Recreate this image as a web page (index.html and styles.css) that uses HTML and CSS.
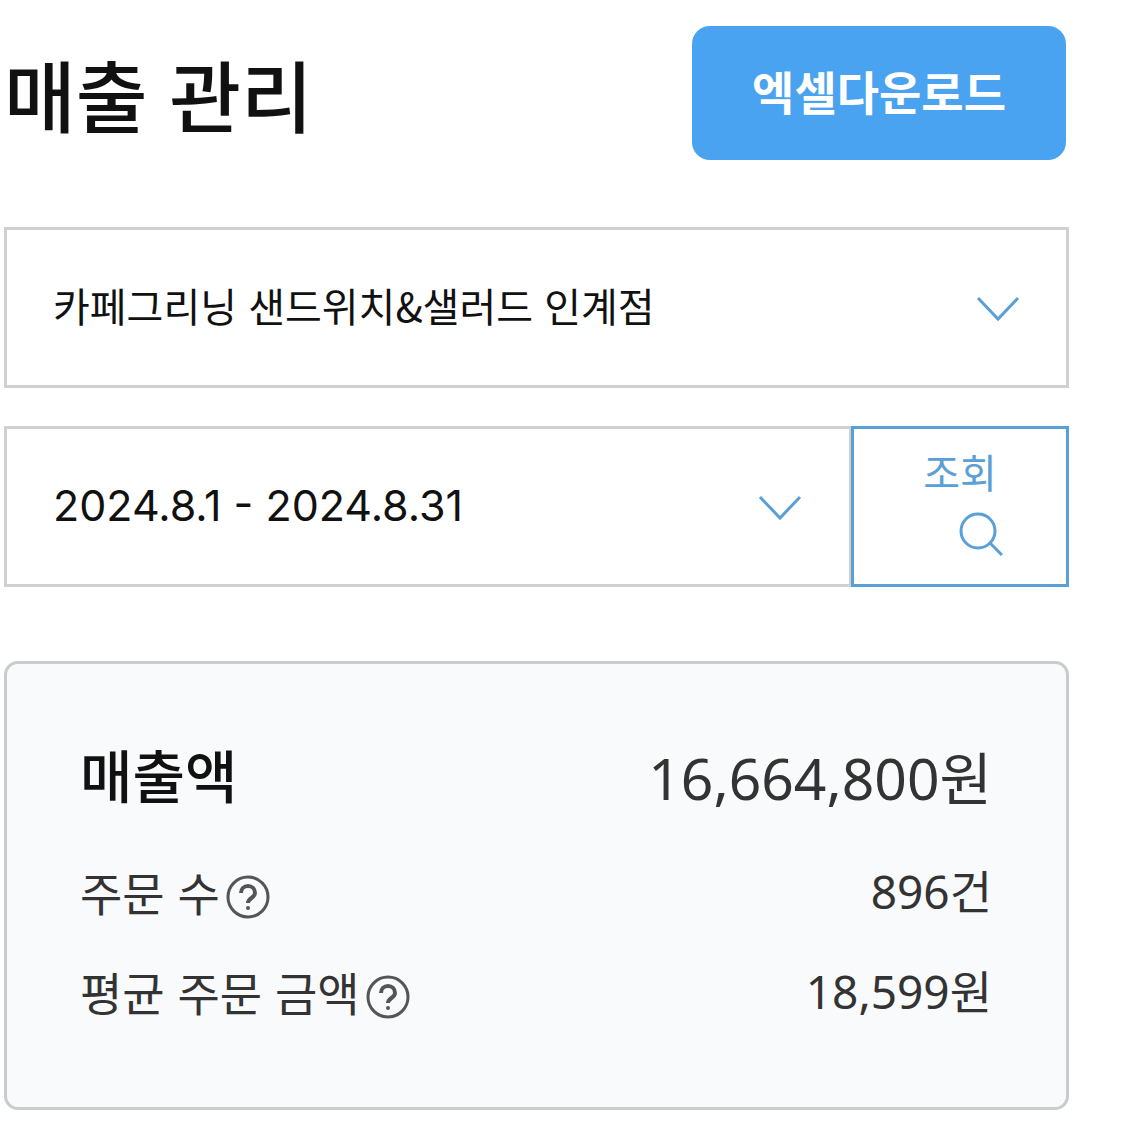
FILE: index.html
```html
<!DOCTYPE html>
<html lang="ko">
<head>
<meta charset="utf-8">
<meta name="viewport" content="width=device-width, initial-scale=1">
<title>매출 관리</title>
<link rel="stylesheet" href="styles.css">
</head>

<body>
<div class="wrap">
    <div class="header">
        <h1>매출 관리</h1>
        <button type="button" class="btn-excel">엑셀다운로드</button>
    </div>

    <form class="search">
        <div class="select-box">
            <select class="store" aria-label="매장 선택">
                <option>카페그리닝 샌드위치&amp;샐러드 인계점</option>
            </select>
            <svg class="arrow" viewBox="0 0 44 26"><path d="M2 2l20 21L42 2"/></svg>
        </div>
        <div class="row">
            <div class="select-box period-box">
                <select class="period" aria-label="조회 기간">
                    <option>2024.8.1 - 2024.8.31</option>
                </select>
                <svg class="arrow" viewBox="0 0 44 26"><path d="M2 2l20 21L42 2"/></svg>
            </div>
            <button type="button" class="btn-search">
                <span>조회</span>
                <svg viewBox="0 0 44 44"><circle cx="19" cy="19" r="17"/><path d="M31 31l12 12"/></svg>
            </button>
        </div>
    </form>

    <dl class="summary">
        <div class="total">
            <dt>매출액</dt>
            <dd>16,664,800원</dd>
        </div>
        <div>
            <dt>주문 수<button type="button" class="help" aria-label="주문 수 도움말"><svg viewBox="0 0 44 44"><circle cx="22" cy="22" r="20"/><path class="mark" d="M15 18c0-4 3-7 7-7s7 3 7 7c0 5-7 5-7 10"/><circle class="dot" cx="22" cy="33" r="2"/></svg></button></dt>
            <dd>896건</dd>
        </div>
        <div>
            <dt>평균 주문 금액<button type="button" class="help" aria-label="평균 주문 금액 도움말"><svg viewBox="0 0 44 44"><circle cx="22" cy="22" r="20"/><path class="mark" d="M15 18c0-4 3-7 7-7s7 3 7 7c0 5-7 5-7 10"/><circle class="dot" cx="22" cy="33" r="2"/></svg></button></dt>
            <dd>18,599원</dd>
        </div>
    </dl>
</div>
</body>
</html>
```
FILE: styles.css
```css
*{margin:0;padding:0;box-sizing:border-box;}
body{background:#fff;color:#111;font-family:"Noto Sans CJK KR",sans-serif;}
button,select{font-family:inherit;background:none;border:0;cursor:pointer;}
svg{display:block;fill:none;stroke:#5a9fd6;stroke-width:3;}

.wrap{padding:26px 54px 13px 4px;}

.header{display:flex;justify-content:space-between;align-items:center;height:134px;margin-bottom:67px;padding-right:3px;}
h1{font-size:78px;line-height:134px;font-weight:500;}
.btn-excel{height:134px;padding:0 60px 6px;border-radius:18px;background:#4aa3f0;color:#fff;font-size:46px;font-weight:700;}

.select-box{position:relative;}
.select-box select{display:block;width:100%;height:161px;padding:0 120px 6px 46px;border:3px solid #d0d0d0;background:#fff;color:#111;font-size:40px;appearance:none;}
.select-box .period{padding-bottom:4px;font-family:Inter,"Noto Sans CJK KR",sans-serif;font-size:43px;}
.arrow{position:absolute;right:49px;top:69px;width:44px;height:26px;pointer-events:none;}
.row{display:flex;margin-top:38px;}
.period-box{flex:1;}
.period-box select{border-right-width:2px;}
.btn-search{display:flex;flex-direction:column;align-items:center;width:218px;height:161px;padding-top:16px;border:3px solid #5a9fd6;color:#5a9fd6;font-size:40px;line-height:52px;}
.btn-search svg{width:44px;height:44px;margin:15px 0 0 42px;}

.summary{margin-top:74px;padding:70px 74px 66px 73px;border:3px solid #c8cccf;border-radius:14px;background:#f9fafc;color:#333;font-size:46px;line-height:100px;}
.summary div{display:flex;justify-content:space-between;}
.summary dt{display:flex;align-items:center;}
.summary dd{font-family:"Noto Sans","Noto Sans CJK KR",sans-serif;}
.summary .total{margin-bottom:19px;font-size:57px;line-height:88px;}
.total dt{padding-bottom:10px;line-height:78px;color:#111;font-weight:500;}
.help{width:44px;height:44px;margin:12px 0 0 6px;}
.help svg{stroke:#555;}
.help .mark{stroke-width:4;}
.help .dot{fill:#555;stroke:none;}
```
